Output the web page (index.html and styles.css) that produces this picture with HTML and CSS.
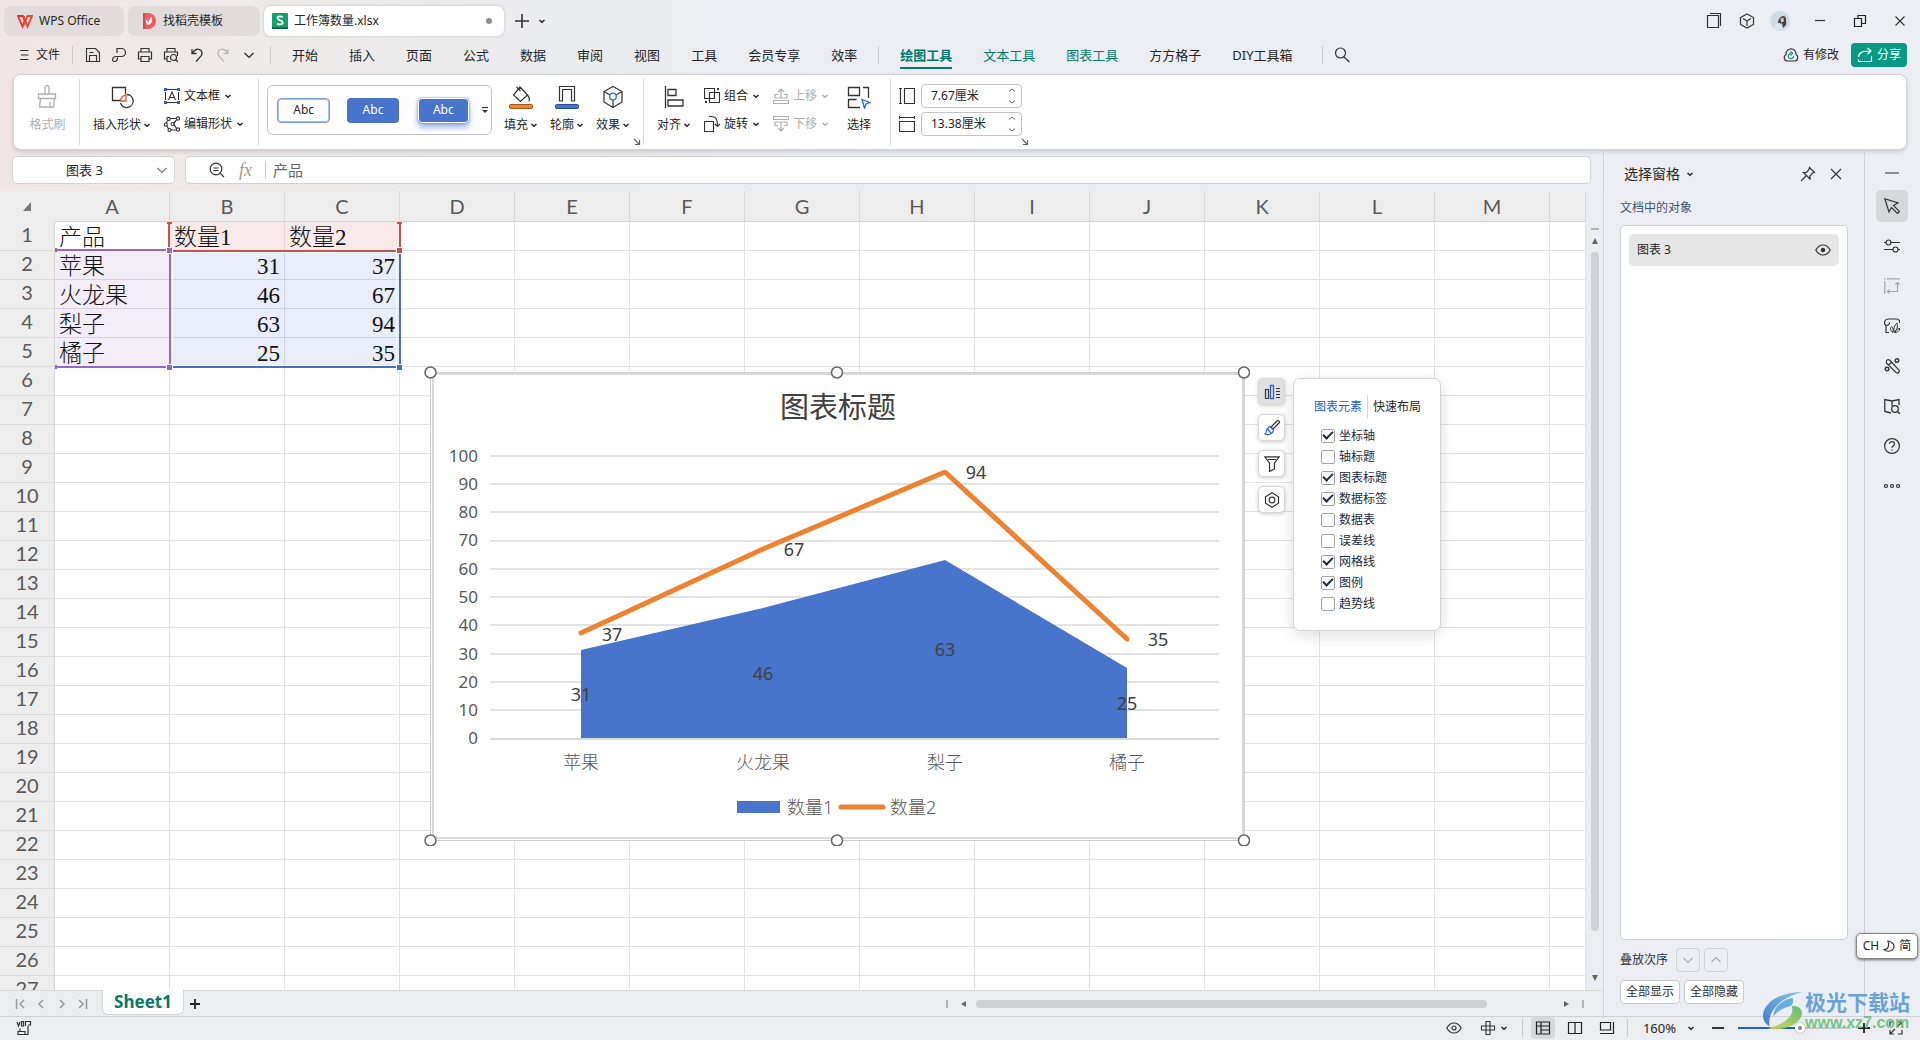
FILE: index.html
```html
<!DOCTYPE html>
<html lang="zh-CN">
<head>
<meta charset="utf-8">
<title>工作簿数量.xlsx - WPS Office</title>
<link rel="stylesheet" href="styles.css">
</head>
<body>
<svg class="sprite" aria-hidden="true">
  <symbol id="chev" viewBox="0 0 8 8"><path d="M1.500 3L4 5.300 6.500 3" fill="none" stroke="currentColor" stroke-width="1.500"/></symbol>
  <symbol id="chev-wide" viewBox="0 0 12 12"><path d="M1.500 4L6 8.500 10.500 4" fill="none" stroke="currentColor" stroke-width="1.200"/></symbol>
  <symbol id="launch" viewBox="0 0 8 8"><path d="M1 1L6.500 6.500M6.500 2V6.500H2" fill="none" stroke="currentColor" stroke-width="1.200"/></symbol>
</svg>

<header class="titlebar">
  <button class="doc-tab home-tab">
    <svg class="i16" viewBox="0 0 16 16"><path d="M1 3h5l1.500 5L5.500 13.500z" fill="none" stroke="#e8302a" stroke-width="1.800"/><path d="M6.500 3L10.500 13.500 15 3H10.500L6 13.500" fill="none" stroke="#f0452c" stroke-width="1.800"/></svg>
    <span>WPS Office</span>
  </button>
  <button class="doc-tab docer-tab">
    <svg class="i16" viewBox="0 0 16 16"><path d="M2 0h4v16H2z" fill="#d94a4d"/><path d="M4 0h3a8 8 0 0 1 0 16H4z" fill="#f25a5c"/><path d="M7 12C4.500 10.500 4.500 8 5 6.500 7 8 7.500 9.500 7 12zM7.500 12C7 8 8.500 5 11 4c.5 4-.5 7-3.500 8z" fill="#fff"/></svg>
    <span>找稻壳模板</span>
  </button>
  <button class="doc-tab file-tab">
    <svg class="i16" viewBox="0 0 16 16"><rect width="16" height="16" rx="1" fill="#13a06c"/><path d="M0 14h16v2H0z" fill="#0a6b49"/><path d="M10.800 4.300C9.500 3 5.500 2.800 5.500 5.200S10.700 7 10.700 9.500 6.500 12 5 10.300" fill="none" stroke="#fff" stroke-width="1.800"/></svg>
    <span>工作簿数量.xlsx</span>
    <i class="unsaved"></i>
  </button>
  <button class="icon-btn new-tab" aria-label="新建"><svg class="i16" viewBox="0 0 16 16"><path d="M8 1v14M1 8h14" stroke="#333" stroke-width="1.600"/></svg></button>
  <button class="icon-btn" aria-label="标签列表"><svg class="i8"><use href="#chev"/></svg></button>
  <div class="window-tools">
    <button class="icon-btn" aria-label="窗口"><svg class="i16" viewBox="0 0 16 16"><path d="M1.500 2.500h11v12h-11zM4 .5h10.500V13" fill="none" stroke="#333" stroke-width="1.200"/></svg></button>
    <button class="icon-btn" aria-label="应用"><svg class="i16" viewBox="0 0 16 16"><path d="M8 1l6.500 3.500v7L8 15l-6.500-3.500v-7zM4 5.500L8 8l4-2.500M8 8v5" fill="none" stroke="#333" stroke-width="1.200"/></svg></button>
    <button class="icon-btn" aria-label="账户"><svg class="i20" viewBox="0 0 20 20"><circle cx="10" cy="10" r="10" fill="#cfdbe2"/><path d="M8 15c0-4 0-7 3-9 2-2 5-1 5 2 0 3 1 5-1 7l-2 2-1-5z" fill="#443f49"/><path d="M10.500 7.500l3-1 .5 4-3 1z" fill="#e8b9a8"/><path d="M4 18c0-4 3-6 6-6l2 5c-3 2-6 2-8 1z" fill="#dde8ed"/></svg></button>
    <button class="icon-btn" aria-label="最小化"><svg class="i16" viewBox="0 0 16 16"><path d="M3 7.500h10" stroke="#333" stroke-width="1.200"/></svg></button>
    <button class="icon-btn" aria-label="还原"><svg class="i16" viewBox="0 0 16 16"><path d="M2.500 5.500h7v8h-7zM6 5V2.500h7.500v8H10" fill="none" stroke="#222" stroke-width="1.200"/></svg></button>
    <button class="icon-btn" aria-label="关闭"><svg class="i16" viewBox="0 0 16 16"><path d="M3.500 3.500l9 9M12.500 3.500l-9 9" stroke="#333" stroke-width="1.200"/></svg></button>
  </div>
</header>

<nav class="menubar">
  <button class="file-menu"><svg class="i12" viewBox="0 0 12 12"><path d="M2 1.500h8.500M3 6h7.500M2 10.500h8.500" stroke="#333" stroke-width="1.200"/></svg><span>文件</span></button>
  <i class="vline"></i>
  <div class="quick">
    <button class="icon-btn" aria-label="保存"><svg class="i16" viewBox="0 0 16 16"><path d="M1.500 1.500h9l4 4v9h-13zM4.500 14.500v-6h7v6M4.500 5.500h4" fill="none" stroke="#333" stroke-width="1.100"/></svg></button>
    <button class="icon-btn" aria-label="输出"><svg class="i16" viewBox="0 0 16 16"><path d="M6 6V1.500h4.500a4 4 0 0 1 0 8H5c-4 0-4.500 5-1.500 5 2 0 3-1 3-4" fill="none" stroke="#333" stroke-width="1.200"/></svg></button>
    <button class="icon-btn" aria-label="打印"><svg class="i16" viewBox="0 0 16 16"><path d="M4 5V1.500h8V5M4 12H1.500V5h13v7H12M4 9.500h8v5H4z" fill="none" stroke="#333" stroke-width="1.200"/></svg></button>
    <button class="icon-btn" aria-label="打印预览"><svg class="i16" viewBox="0 0 16 16"><path d="M4 5V1.500h8V5M4 12H1.500V5h13v4M4 14.500V9.500h2M4 14.500h4" fill="none" stroke="#333" stroke-width="1.200"/><circle cx="10.500" cy="10.500" r="3" fill="none" stroke="#333" stroke-width="1.200"/><path d="M12.700 12.700l2.300 2.300" stroke="#333" stroke-width="1.200"/></svg></button>
    <button class="icon-btn" aria-label="撤销"><svg class="i16" viewBox="0 0 16 16"><path d="M3 2v4.500h4.500M3.500 6C8-1 15 3 12.500 8.500L7 14.500" fill="none" stroke="#333" stroke-width="1.300"/></svg></button>
    <button class="icon-btn" aria-label="恢复" disabled><svg class="i16" viewBox="0 0 16 16"><path d="M13 2v4.500H8.500M12.500 6C8-1 1 3 3.500 8.500L9 14.500" fill="none" stroke="#b5b5b5" stroke-width="1.200"/></svg></button>
    <button class="icon-btn" aria-label="更多"><svg class="i12"><use href="#chev-wide"/></svg></button>
  </div>
  <i class="vline"></i>
  <div class="menus">
    <button>开始</button><button>插入</button><button>页面</button><button>公式</button><button>数据</button><button>审阅</button><button>视图</button><button>工具</button><button>会员专享</button><button>效率</button>
  </div>
  <i class="vline"></i>
  <div class="menus">
    <button class="ctx current">绘图工具</button><button class="ctx">文本工具</button><button class="ctx">图表工具</button><button>方方格子</button><button>DIY工具箱</button>
  </div>
  <i class="vline search-line"></i>
  <button class="icon-btn" aria-label="搜索"><svg class="i16" viewBox="0 0 16 16"><circle cx="6.500" cy="6" r="5" fill="none" stroke="#333" stroke-width="1.200"/><path d="M10 10l5.500 5" stroke="#333" stroke-width="1.300"/></svg></button>
  <div class="share-box">
    <button class="changed"><svg class="i16" viewBox="0 0 16 16"><path d="M4 14a3.500 3.500 0 0 1-1-6.500C3 0 13 0 13 7.500A3.500 3.500 0 0 1 12 14z" fill="none" stroke="#333" stroke-width="1.200"/><path d="M10.500 9A2.600 2.600 0 1 1 8 6.500M7.500 4.500l2 2-2 2" fill="none" stroke="#0b9b7c" stroke-width="1.200"/></svg><span>有修改</span></button>
    <button class="share"><svg class="i16" viewBox="0 0 16 16"><path d="M1.500 10C2 5 6 4 13.500 4M10.500 1l3.500 3-3.500 3M1.500 12v2.500h13V9" fill="none" stroke="#fff" stroke-width="1.200"/></svg><span>分享</span></button>
  </div>
</nav>

<section class="ribbon">
  <div class="group g-brush">
    <button class="big off" disabled><svg class="i24" viewBox="0 0 24 24"><path d="M10 9V2.500a2 2 0 0 1 4 0V9M3.500 9h17v4.500h-17zM5.500 13.500L4.500 22h14l1-8.500M15 22v-5" fill="none" stroke="currentColor" stroke-width="1.300"/></svg><span>格式刷</span></button>
  </div>
  <div class="group g-shape">
    <button class="big"><svg class="i24" viewBox="0 0 24 24"><path d="M11 15.500H2.500v-13h13V9" fill="none" stroke="#333" stroke-width="1.300"/><path d="M17 9.500a6.500 6.500 0 1 1-6.500 8.500" fill="none" stroke="#333" stroke-width="1.300"/><path d="M10.500 16a6 6 0 0 1 5.500-6v6z" fill="none" stroke="#d9622b" stroke-width="1.400"/></svg><span>插入形状<svg class="i8"><use href="#chev"/></svg></span></button>
    <div class="stack">
      <button class="line"><svg class="i16" viewBox="0 0 16 16"><path d="M3 1.500h10M3 14.500h10M1.500 4v8M14.500 4v8" stroke="#333"/><path d="M4.500 12L8 4l3.500 8M5.500 9.500h5" fill="none" stroke="#333" stroke-width="1.100"/><path d="M0 0h3v3H0zM13 0h3v3h-3zM0 13h3v3H0zM13 13h3v3h-3z" fill="#2f5bea"/></svg><span>文本框</span><svg class="i8"><use href="#chev"/></svg></button>
      <button class="line"><svg class="i16" viewBox="0 0 16 16"><path d="M6 2.500h6M3.500 5L2 7.500M2.500 9.500L5 13.500M7 14h5M12.500 4L9.500 7.500l3 5" fill="none" stroke="#333" stroke-width="1.200"/><g fill="#fff" stroke="#333" stroke-width="1.100"><circle cx="4.500" cy="3" r="1.600"/><circle cx="14" cy="2.500" r="1.600"/><circle cx="1.800" cy="8.500" r="1.500"/><circle cx="8.500" cy="8" r="1.500"/><circle cx="5.500" cy="14" r="1.500"/><circle cx="14" cy="13.500" r="1.600"/></g></svg><span>编辑形状</span><svg class="i8"><use href="#chev"/></svg></button>
    </div>
  </div>
  <div class="group g-style">
    <div class="gallery">
      <button class="swatch outline">Abc</button>
      <button class="swatch fill">Abc</button>
      <button class="swatch fill glow">Abc</button>
      <button class="icon-btn" aria-label="更多样式"><svg class="i8" viewBox="0 0 8 8"><path d="M1 1.500h6" stroke="#333" stroke-width="1.200"/><path d="M1 4h6L4 7z" fill="#333"/></svg></button>
    </div>
    <button class="big"><svg class="i24" viewBox="0 0 24 24"><path d="M11 2l7.500 8-7 6.500L4.500 10zM7.500 2l4 4M18.500 10c2.500 3 2 6 1 6" fill="none" stroke="#333" stroke-width="1.200"/><rect x=".5" y="19.500" width="23" height="4" rx="1" fill="#f0832e" stroke="#a85a1c"/></svg><span>填充<svg class="i8"><use href="#chev"/></svg></span></button>
    <button class="big"><svg class="i24" viewBox="0 0 24 24"><path d="M4.500 16V1.500h15V16h-3V4.500h-9V16z" fill="none" stroke="#333" stroke-width="1.200"/><rect x=".5" y="19.500" width="23" height="4" rx="1" fill="#4874cb" stroke="#2b4f96"/></svg><span>轮廓<svg class="i8"><use href="#chev"/></svg></span></button>
    <button class="big"><svg class="i24" viewBox="0 0 24 24"><path d="M12 1.500l9 5v10.500l-9 5.500-9-5.500V6.500zM3 6.500l6 3.500M21 6.500L15 10M12 15v7" fill="none" stroke="#333" stroke-width="1.200"/><circle cx="12" cy="11.500" r="3.300" fill="none" stroke="#2f6be0" stroke-width="1.300"/></svg><span>效果<svg class="i8"><use href="#chev"/></svg></span></button>
    <svg class="i8 launcher"><use href="#launch"/></svg>
  </div>
  <div class="group g-arrange">
    <button class="big"><svg class="i24" viewBox="0 0 24 24"><path d="M3.500 1v22M6 4.500h8v6H6zM6 15h15v6H6z" fill="none" stroke="#333" stroke-width="1.300"/></svg><span>对齐<svg class="i8"><use href="#chev"/></svg></span></button>
    <div class="stack">
      <button class="line"><svg class="i16" viewBox="0 0 16 16"><path d="M.5.500h10v10H.5zM5.500 4.500h10v10h-10z" fill="none" stroke="#333" stroke-width="1.200"/><path d="M13 0h2v2h-2zM1 13h2v2H1z" fill="#333"/></svg><span>组合</span><svg class="i8"><use href="#chev"/></svg></button>
      <button class="line"><svg class="i16" viewBox="0 0 16 16"><path d="M.5 5.500h9v10h-9zM5 .5c6 0 8.500 1 8.500 9.500M11 8l2.500 2.500L16 8" fill="none" stroke="#333" stroke-width="1.200"/></svg><span>旋转</span><svg class="i8"><use href="#chev"/></svg></button>
    </div>
    <div class="stack">
      <button class="line off" disabled><svg class="i16" viewBox="0 0 16 16"><path d="M8 1v9M5 4l3-3 3 3M5 6.500H2v3.500h12V6.500h-3M.5 12.500h15v3H.5z" fill="none" stroke="currentColor" stroke-width="1.200"/></svg><span>上移</span><svg class="i8"><use href="#chev"/></svg></button>
      <button class="line off" disabled><svg class="i16" viewBox="0 0 16 16"><path d="M8 6v9M5 12l3 3 3-3M5 9.500H2V6h12v3.500h-3M.5.500h15v3H.5z" fill="none" stroke="currentColor" stroke-width="1.200"/></svg><span>下移</span><svg class="i8"><use href="#chev"/></svg></button>
    </div>
    <button class="big pick"><svg class="i24" viewBox="0 0 24 24"><path d="M1.500 2.500h11v8h-11zM16 2.500h5.500V13M1.500 14v8.500H13M1.500 14.500h8" fill="none" stroke="#333" stroke-width="1.300"/><path d="M15 14.500l8 3-4 1.500-1.500 4z" fill="#fff" stroke="#2f5bea" stroke-width="1.300"/></svg><span>选择</span></button>
  </div>
  <div class="group g-size">
    <div class="sizes">
      <label class="size"><svg class="i16" viewBox="0 0 16 16"><path d="M1.500 0v16M0 .5h3M0 15.500h3M5.500.500h10v15h-10z" fill="none" stroke="#333" stroke-width="1.200"/></svg>
        <span class="spin"><input type="text" value="7.67厘米" aria-label="高度"><svg class="arrows" viewBox="0 0 8 18"><path d="M1 4.500L4 2l3 2.500M1 13.500L4 16l3-2.500" fill="none" stroke="#666"/></svg></span></label>
      <label class="size"><svg class="i16" viewBox="0 0 16 16"><path d="M0 1.500h16M.5 0v3M15.500 0v3M.5 5.500h15v10H.5z" fill="none" stroke="#333" stroke-width="1.200"/></svg>
        <span class="spin"><input type="text" value="13.38厘米" aria-label="宽度"><svg class="arrows" viewBox="0 0 8 18"><path d="M1 4.500L4 2l3 2.500M1 13.500L4 16l3-2.500" fill="none" stroke="#666"/></svg></span></label>
    </div>
    <svg class="i8 launcher"><use href="#launch"/></svg>
  </div>
</section>

<main class="workspace">
  <section class="book">
    <div class="formula-row">
      <div class="name-box"><input type="text" value="图表 3" aria-label="名称框"><svg class="i12"><use href="#chev-wide"/></svg></div>
      <div class="formula-box">
        <svg class="i16" viewBox="0 0 16 16"><circle cx="7" cy="7" r="5.800" fill="none" stroke="#333" stroke-width="1.200"/><path d="M11.300 11.300L15 15M4.500 6h5M4.500 8.500h5" stroke="#333" stroke-width="1.200"/></svg>
        <em>fx</em>
        <input type="text" value="产品" aria-label="编辑栏">
      </div>
    </div>
    <div class="sheet-row">
      <div class="sheet">
        <table class="cells">
          <colgroup><col class="c-head"><col class="c"><col class="c"><col class="c"><col class="c"><col class="c"><col class="c"><col class="c"><col class="c"><col class="c"><col class="c"><col class="c"><col class="c"><col class="c"><col></colgroup>
          <thead><tr><th class="corner"><svg class="i12" viewBox="0 0 12 12"><path d="M10 2v9H2z" fill="#777"/></svg></th><th>A</th><th>B</th><th>C</th><th>D</th><th>E</th><th>F</th><th>G</th><th>H</th><th>I</th><th>J</th><th>K</th><th>L</th><th>M</th><th></th></tr></thead>
          <tbody>
          <tr><th>1</th><td>产品</td><td class="red">数量1</td><td class="red">数量2</td><td><td><td><td><td><td><td><td><td><td><td></tr>
          <tr><th>2</th><td class="violet">苹果</td><td class="blue">31</td><td class="blue">37</td><td><td><td><td><td><td><td><td><td><td><td></tr>
          <tr><th>3</th><td class="violet">火龙果</td><td class="blue">46</td><td class="blue">67</td><td><td><td><td><td><td><td><td><td><td><td></tr>
          <tr><th>4</th><td class="violet">梨子</td><td class="blue">63</td><td class="blue">94</td><td><td><td><td><td><td><td><td><td><td><td></tr>
          <tr><th>5</th><td class="violet">橘子</td><td class="blue">25</td><td class="blue">35</td><td><td><td><td><td><td><td><td><td><td><td></tr>
          <tr><th>6</th><td><td><td><td><td><td><td><td><td><td><td><td><td><td></tr>
          <tr><th>7</th><td><td><td><td><td><td><td><td><td><td><td><td><td><td></tr>
          <tr><th>8</th><td><td><td><td><td><td><td><td><td><td><td><td><td><td></tr>
          <tr><th>9</th><td><td><td><td><td><td><td><td><td><td><td><td><td><td></tr>
          <tr><th>10</th><td><td><td><td><td><td><td><td><td><td><td><td><td><td></tr>
          <tr><th>11</th><td><td><td><td><td><td><td><td><td><td><td><td><td><td></tr>
          <tr><th>12</th><td><td><td><td><td><td><td><td><td><td><td><td><td><td></tr>
          <tr><th>13</th><td><td><td><td><td><td><td><td><td><td><td><td><td><td></tr>
          <tr><th>14</th><td><td><td><td><td><td><td><td><td><td><td><td><td><td></tr>
          <tr><th>15</th><td><td><td><td><td><td><td><td><td><td><td><td><td><td></tr>
          <tr><th>16</th><td><td><td><td><td><td><td><td><td><td><td><td><td><td></tr>
          <tr><th>17</th><td><td><td><td><td><td><td><td><td><td><td><td><td><td></tr>
          <tr><th>18</th><td><td><td><td><td><td><td><td><td><td><td><td><td><td></tr>
          <tr><th>19</th><td><td><td><td><td><td><td><td><td><td><td><td><td><td></tr>
          <tr><th>20</th><td><td><td><td><td><td><td><td><td><td><td><td><td><td></tr>
          <tr><th>21</th><td><td><td><td><td><td><td><td><td><td><td><td><td><td></tr>
          <tr><th>22</th><td><td><td><td><td><td><td><td><td><td><td><td><td><td></tr>
          <tr><th>23</th><td><td><td><td><td><td><td><td><td><td><td><td><td><td></tr>
          <tr><th>24</th><td><td><td><td><td><td><td><td><td><td><td><td><td><td></tr>
          <tr><th>25</th><td><td><td><td><td><td><td><td><td><td><td><td><td><td></tr>
          <tr><th>26</th><td><td><td><td><td><td><td><td><td><td><td><td><td><td></tr>
          <tr><th>27</th><td><td><td><td><td><td><td><td><td><td><td><td><td><td></tr>
          </tbody>
        </table>

        <svg class="ranges" viewBox="54 30 350 150" aria-hidden="true">
          <path d="M172 61.500H396M58 57.500H166M172 174.500H396M396.500 62V172M172.500 62V172" stroke="#fff"/>
          <path d="M169 31V60M400 31V60M167 32h5M397 32h5M170 60H400" stroke="#c8504f" stroke-width="2" fill="none"/>
          <path d="M56 59H170M56 176H170M170 59V176M56 57v4M56 174v4" stroke="#9568c3" stroke-width="2" fill="none"/>
          <path d="M172 176H400V62" stroke="#4470cc" stroke-width="2" fill="none"/>
          <g stroke="#fff"><path d="M166.500 56.500h6v6h-6zM166.500 173.500h6v6h-6z" fill="#9568c3"/><path d="M396.500 56.500h6v6h-6z" fill="#c8504f"/><path d="M396.500 173.500h6v6h-6z" fill="#4470cc"/></g>
        </svg>

        <svg class="chart" viewBox="424 367 826 480" role="img" aria-label="图表标题">
          <rect x="430.500" y="373.500" width="814" height="468" fill="#fff" stroke="#d0d0d0"/>
          <rect x="433" y="375" width="810" height="464" fill="#fff" stroke="#d9d9d9" stroke-width="2"/>
          <text class="chart-title" x="838" y="419">图表标题</text>
          <path d="M490 457H1219M490 485H1219M490 513H1219M490 542H1219M490 570H1219M490 598H1219M490 626H1219M490 655H1219M490 683H1219M490 711H1219" stroke="#e3e3e3" stroke-width="2"/>
          <path d="M490 740H1219" stroke="#d9d9d9" stroke-width="2"/>
          <path d="M581 651L763 609 945 561 1127 669V739H581z" fill="#4874cb"/>
          <path d="M581 634L763 550 945 473 1127 640" fill="none" stroke="#ee822f" stroke-width="5" stroke-linecap="round" stroke-linejoin="bevel"/>
          <g class="axis-y"><text x="478" y="463">100</text><text x="478" y="491">90</text><text x="478" y="519">80</text><text x="478" y="547">70</text><text x="478" y="576">60</text><text x="478" y="604">50</text><text x="478" y="632">40</text><text x="478" y="661">30</text><text x="478" y="689">20</text><text x="478" y="717">10</text><text x="478" y="745">0</text></g>
          <g class="axis-x"><text x="581" y="770">苹果</text><text x="763" y="770">火龙果</text><text x="945" y="770">梨子</text><text x="1127" y="770">橘子</text></g>
          <g class="values"><text x="581" y="702">31</text><text x="763" y="681">46</text><text x="945" y="657">63</text><text x="1127" y="711">25</text><text x="612" y="642">37</text><text x="794" y="557">67</text><text x="976" y="480">94</text><text x="1158" y="647">35</text></g>
          <rect x="737" y="802" width="43" height="12" fill="#4874cb"/>
          <path d="M841 808H883" stroke="#ee822f" stroke-width="5" stroke-linecap="round"/>
          <g class="legend"><text x="787" y="815">数量1</text><text x="890" y="815">数量2</text></g>
          <g fill="#fff" stroke="#666" stroke-width="1.500"><circle cx="430.500" cy="373.500" r="5.500"/><circle cx="837" cy="373.500" r="5.500"/><circle cx="1244" cy="373.500" r="5.500"/><circle cx="430.500" cy="841.500" r="5.500"/><circle cx="837" cy="841.500" r="5.500"/><circle cx="1244" cy="841.500" r="5.500"/></g>
        </svg>

        <div class="chart-tools">
          <button class="active" aria-label="图表元素"><svg class="i16" viewBox="0 0 16 16"><path d="M1.500 5.500h3v9h-3z" fill="none" stroke="#333" stroke-width="1.200"/><path d="M6.500 1.500h3v13h-3z" fill="none" stroke="#2f5bea" stroke-width="1.300"/><path d="M12 4.500h4M12 7.500h4M12 10.500h4M12 13.500h4" stroke="#333" stroke-width="1.200"/></svg></button>
          <button aria-label="图表样式"><svg class="i16" viewBox="0 0 16 16"><path d="M7 7l6-6c2-1 3 1 2 2L9 9z" fill="none" stroke="#333" stroke-width="1.200"/><path d="M6 6.500L9.500 10c-1 5-6 5-8.500 4 2-1 1-3 2-5 1-1 2-1.500 3-2.500zM3.500 9L7 13" fill="none" stroke="#2f5bea" stroke-width="1.200"/></svg></button>
          <button aria-label="图表筛选"><svg class="i16" viewBox="0 0 16 16"><path d="M.8.800h14.400L10.500 7v6l-5 2.500V7zM4 3.500h8" fill="none" stroke="#333" stroke-width="1.200"/></svg></button>
          <button aria-label="图表设置"><svg class="i16" viewBox="0 0 16 16"><path d="M8 .8l6.500 4v6.400L8 15.200l-6.500-4V4.800z" fill="none" stroke="#333" stroke-width="1.200"/><circle cx="8" cy="8" r="2.800" fill="none" stroke="#333" stroke-width="1.200"/></svg></button>
        </div>
        <div class="elements">
          <div class="el-tabs"><button class="on">图表元素</button><i></i><button>快速布局</button></div>
          <label><input type="checkbox" checked>坐标轴</label>
          <label><input type="checkbox">轴标题</label>
          <label><input type="checkbox" checked>图表标题</label>
          <label><input type="checkbox" checked>数据标签</label>
          <label><input type="checkbox">数据表</label>
          <label><input type="checkbox">误差线</label>
          <label><input type="checkbox" checked>网格线</label>
          <label><input type="checkbox" checked>图例</label>
          <label><input type="checkbox">趋势线</label>
        </div>
      </div>
      <div class="vscroll"><i class="dash"></i><svg class="i8" viewBox="0 0 8 8"><path d="M4 1l3 6H1z" fill="#666"/></svg><div class="vtrack"><i class="vthumb"></i></div><svg class="i8" viewBox="0 0 8 8"><path d="M4 7l3-6H1z" fill="#666"/></svg></div>
    </div>
    <footer class="sheet-tabs">
      <div class="sheet-nav">
        <button class="icon-btn" aria-label="第一张"><svg class="i12" viewBox="0 0 12 12"><path d="M2.500 1v10M10 2L6 6l4 4" fill="none" stroke="currentColor" stroke-width="1.500"/></svg></button>
        <button class="icon-btn" aria-label="上一张"><svg class="i12" viewBox="0 0 12 12"><path d="M8 2L4 6l4 4" fill="none" stroke="currentColor" stroke-width="1.500"/></svg></button>
        <button class="icon-btn" aria-label="下一张"><svg class="i12" viewBox="0 0 12 12"><path d="M4 2l4 4-4 4" fill="none" stroke="currentColor" stroke-width="1.500"/></svg></button>
        <button class="icon-btn" aria-label="最后一张"><svg class="i12" viewBox="0 0 12 12"><path d="M9.500 1v10M2 2l4 4-4 4" fill="none" stroke="currentColor" stroke-width="1.500"/></svg></button>
      </div>
      <button class="sheet-tab">Sheet1</button>
      <button class="icon-btn add-sheet" aria-label="新建工作表"><svg class="i12" viewBox="0 0 12 12"><path d="M6 1v10M1 6h10" stroke="#222" stroke-width="1.800"/></svg></button>
      <div class="hscroll"><i class="bar"></i><svg class="i8" viewBox="0 0 8 8"><path d="M1 4l5-3v6z" fill="#666"/></svg><div class="htrack"><i class="hthumb"></i></div><svg class="i8" viewBox="0 0 8 8"><path d="M7 4L2 1v6z" fill="#666"/></svg><i class="bar"></i></div>
    </footer>
  </section>

  <aside class="pane">
    <div class="pane-head"><h2>选择窗格</h2><svg class="i8"><use href="#chev"/></svg>
      <div class="pane-actions">
        <button class="icon-btn" aria-label="固定"><svg class="i16" viewBox="0 0 16 16"><path d="M9.500 1.500l5 5-2 .5-2.500 3v3L3.500 6.500h3l2.500-3zM6 10l-5 5" fill="none" stroke="#333" stroke-width="1.200"/></svg></button>
        <button class="icon-btn" aria-label="关闭窗格"><svg class="i12" viewBox="0 0 12 12"><path d="M1 1l10 10M11 1L1 11" stroke="#333" stroke-width="1.200"/></svg></button>
      </div>
    </div>
    <p class="pane-sub">文档中的对象</p>
    <ul class="objects"><li><span>图表 3</span><svg class="i16" viewBox="0 0 16 16"><path d="M.8 8C3 4 5.500 3 8 3s5 1 7.200 5C13 12 10.500 13 8 13S3 12 .8 8z" fill="none" stroke="#333" stroke-width="1.200"/><circle cx="8" cy="8" r="2.200" fill="#333"/></svg></li></ul>
    <div class="order"><span>叠放次序</span><button disabled aria-label="下移一层"><svg class="i12"><use href="#chev-wide"/></svg></button><button disabled aria-label="上移一层"><svg class="i12 flip"><use href="#chev-wide"/></svg></button></div>
    <div class="show-all"><button>全部显示</button><button>全部隐藏</button></div>
  </aside>

  <aside class="rail">
    <button class="mini" aria-label="收起"><svg class="i16" viewBox="0 0 16 16"><path d="M1 8h14" stroke="#8c8c8c" stroke-width="2"/></svg></button>
    <button class="on" aria-label="选择"><svg class="i16" viewBox="0 0 16 16"><path d="M.8.800L14 5 9.500 7.500 15.500 13.500 13.500 15.500 7.500 9.500 5 14z" fill="none" stroke="#333" stroke-width="1.200"/></svg></button>
    <button aria-label="属性"><svg class="i16" viewBox="0 0 16 16"><path d="M0 4.500h2M7 4.500h9M0 11.500h9M14 11.500h2" stroke="#333" stroke-width="1.200"/><circle cx="4.500" cy="4.500" r="2.500" fill="none" stroke="#333" stroke-width="1.200"/><circle cx="11.500" cy="11.500" r="2.500" fill="none" stroke="#333" stroke-width="1.200"/></svg></button>
    <button aria-label="分析" disabled><svg class="i16" viewBox="0 0 16 16"><path d="M3 .8h13M.8 3v13M0 .8h1.600M13.500 4.500v9h-10M11.500 6.500l2-2 2 2M5.500 11.500l-2 2 2 2" fill="none" stroke="#a5a5a5" stroke-width="1.200"/></svg></button>
    <button aria-label="图库"><svg class="i16" viewBox="0 0 16 16"><path d="M5 14.500H2V7.500C-1 5 1 1 4 1h9c2 0 3 2 2.500 4M5.500 4.500c0 2-2 3-3.500 3" fill="none" stroke="#333" stroke-width="1.200"/><path d="M8.500 14.500C6 12 6 10 7.500 8.500 9.500 10 9.500 12 8.500 14.500zM10 14.500C9.500 10 10.500 7 13 5c1 4 0 7-3 9.500zM11 14.500c1-3 3-4 5-4-1 3-3 4-5 4z" fill="none" stroke="#333"/></svg></button>
    <button aria-label="工具"><svg class="i16" viewBox="0 0 16 16"><path d="M5.500 2L15 12c1 2-1 4-3 2.500L2.500 5C2 2.500 3.500 1 5.500 2zM4.500 7L7.500 4.500" fill="none" stroke="#333" stroke-width="1.200"/><circle cx="13" cy="2.500" r="1.800" fill="none" stroke="#333" stroke-width="1.400"/><circle cx="3" cy="11" r="1.800" fill="none" stroke="#333" stroke-width="1.400"/></svg></button>
    <button aria-label="查找"><svg class="i16" viewBox="0 0 16 16"><path d="M7 15L.8 13.500V1.500L8 3l7-1.500V7M8 3v5" fill="none" stroke="#333" stroke-width="1.300"/><circle cx="11" cy="11" r="3.300" fill="none" stroke="#333" stroke-width="1.300"/><path d="M13.500 13.500L16 16" stroke="#333" stroke-width="1.300"/></svg></button>
    <button aria-label="帮助"><svg class="i16" viewBox="0 0 16 16"><circle cx="8" cy="8" r="7.400" fill="none" stroke="#333" stroke-width="1.200"/><path d="M5.500 6C5.500 2.500 10.500 3 10.500 6 10.500 7.500 8 7.500 8 10M8 11.500v1.200" fill="none" stroke="#333" stroke-width="1.200"/></svg></button>
    <button aria-label="更多"><svg class="i16" viewBox="0 0 16 16"><g fill="none" stroke="#333" stroke-width="1.200"><circle cx="2" cy="8" r="1.500"/><circle cx="8" cy="8" r="1.500"/><circle cx="14" cy="8" r="1.500"/></g></svg></button>
  </aside>
</main>

<footer class="status">
  <svg class="i16" viewBox="0 0 16 16"><path d="M1 2l1.500 4L4 2M5.500 1.500V6h2V1.500zM9.500 6V1.500h5V5H12M2 14.500v-3h7v3zM4 11.500v-3M9 14.500h3V6" fill="none" stroke="#333" stroke-width="1.200"/></svg>
  <div class="status-tools">
    <svg class="i16 eye" viewBox="0 0 16 16"><path d="M.8 8C3 4 5.500 3 8 3s5 1 7.200 5C13 12 10.500 13 8 13S3 12 .8 8z" fill="none" stroke="#333" stroke-width="1.200"/><circle cx="8" cy="8" r="2" fill="none" stroke="#333" stroke-width="1.200"/></svg>
    <button class="icon-btn move" aria-label="阅读布局"><svg class="i16" viewBox="0 0 16 16"><path d="M6 5.500V1.500h4v4M6 10.500v4h4v-4M5.500 6H1.500v4h4M10.500 6h4v4h-4M6 6h4v4H6z" fill="none" stroke="#333" stroke-width="1.100"/></svg><svg class="i8"><use href="#chev"/></svg></button>
    <i class="vline"></i>
    <button class="icon-btn view on" aria-label="普通视图"><svg class="i16" viewBox="0 0 16 16"><path d="M1.500 2h13v12h-13zM1.500 6h13M6 2v12M6 10h8.500" fill="none" stroke="#222" stroke-width="1.200"/></svg></button>
    <button class="icon-btn view" aria-label="分页预览"><svg class="i16" viewBox="0 0 16 16"><path d="M1.500 2.500h13v11h-13zM8 2.500v11" fill="none" stroke="#222" stroke-width="1.200"/></svg></button>
    <button class="icon-btn view" aria-label="页面布局"><svg class="i16" viewBox="0 0 16 16"><path d="M1.500 2.500h10v7.500h-10zM14.500 2v11.500H1" fill="none" stroke="#222" stroke-width="1.200"/></svg></button>
    <i class="vline"></i>
    <button class="icon-btn zoom-level"><span>160%</span><svg class="i8"><use href="#chev"/></svg></button>
    <button class="icon-btn" aria-label="缩小"><svg class="i12" viewBox="0 0 12 12"><path d="M0 6h12" stroke="#222" stroke-width="1.800"/></svg></button>
    <input class="zoom" type="range" min="0" max="100" value="55" aria-label="缩放">
    <button class="icon-btn" aria-label="放大"><svg class="i12" viewBox="0 0 12 12"><path d="M0 6h12M6 1v10" stroke="#222" stroke-width="1.800"/></svg></button>
    <button class="icon-btn full" aria-label="全屏"><svg class="i16" viewBox="0 0 16 16"><path d="M2 6V2h4M10 2h4v4M14 10v4h-4M6 14H2v-4M9 7l5-5M7 9l-5 5" fill="none" stroke="#333" stroke-width="1.200"/></svg></button>
  </div>
</footer>

<div class="ime"><span>CH</span><svg class="i12" viewBox="0 0 12 12"><path d="M5 1c5 1 7 4 5.500 7.500C8.500 12 3 12 1 9.500 5 9.500 6.500 6 5 1z" fill="none" stroke="#333" stroke-width="1.200"/></svg><span>简</span></div>
<div class="watermark">
  <svg class="wm-logo" viewBox="0 0 44 40"><defs><linearGradient id="wmb" x1="0" y1="1" x2="1" y2="0"><stop offset="0" stop-color="#2f6fc4"/><stop offset="1" stop-color="#7cc4ee"/></linearGradient><linearGradient id="wmg" x1="0" y1="1" x2="1" y2="0"><stop offset="0" stop-color="#d8d84a"/><stop offset="1" stop-color="#4dbb6e"/></linearGradient></defs><path d="M43 0C20 0 2 10 1 25c0 5 3 9 7 11C5 24 16 6 43 0z" fill="url(#wmb)"/><path d="M32 6C20 9 12 16 12 26c4-6 10-9 17-11 4-1 4-5 3-9z" fill="#5aa9e0"/><path d="M6 38c16 4 34-4 36-15 0-6-5-9-11-8 4 8-6 19-25 23z" fill="url(#wmg)"/></svg>
  <div><strong>极光下载站</strong><span>www.xz7.com</span></div>
</div>
</body>
</html>
```
FILE: styles.css
```css
* { box-sizing: border-box; }
html, body { height: 100%; margin: 0; }
body {
  display: flex;
  flex-direction: column;
  overflow: hidden;
  font: 12px/20px "Noto Sans", "Noto Sans CJK SC", sans-serif;
  color: #262626;
  background: linear-gradient(90deg, #efe5e4 0, #eeeae9 240px, #ebecee 560px, #ebedf3 800px, #ebeef2 100%);
}
button, input { font: inherit; color: inherit; }
button { padding: 0; border: 0; background: none; white-space: nowrap; }
input { min-width: 0; border: 0; padding: 0; background: none; outline: 0; }
svg { display: block; flex: none; }
.sprite { position: absolute; width: 0; height: 0; }
.i8 { width: 8px; height: 8px; }
.i12 { width: 12px; height: 12px; }
.i16 { width: 16px; height: 16px; }
.i20 { width: 20px; height: 20px; }
.i24 { width: 24px; height: 24px; }
.icon-btn { display: flex; align-items: center; justify-content: center; }
.vline { flex: none; width: 1px; height: 18px; background: #c9c9cb; }

/* title bar */
.titlebar { display: flex; align-items: center; height: 42px; padding: 0 10px 0 4px; flex: none; }
.doc-tab { display: flex; align-items: center; gap: 6px; height: 30px; margin-right: 4px; padding: 0 13px; border-radius: 7px; background: #e1dcdb; }
.home-tab { width: 120px; }
.docer-tab { width: 132px; }
.file-tab { width: 240px; padding: 0 12px 0 8px; background: #fff; box-shadow: 0 0 3px #0003; }
.unsaved { width: 6px; height: 6px; margin-left: auto; border-radius: 50%; background: #8c8c8c; }
.new-tab { margin: 0 8px 0 6px; }
.window-tools { display: flex; align-items: center; gap: 13px; margin-left: auto; }
.window-tools .icon-btn { width: 20px; }
.window-tools .icon-btn:nth-child(n+4) { margin-left: 7px; }

/* menu bar */
.menubar { display: flex; align-items: center; height: 32px; padding: 0 13px 6px 18px; flex: none; }
.file-menu { display: flex; align-items: center; gap: 6px; margin-right: 12px; }
.quick { display: flex; gap: 10px; margin: 0 13px 0 12px; }
.quick .icon-btn { width: 16px; }
.menus { display: flex; gap: 31px; margin: 0 21px; font-size: 13px; }
.menus button { height: 27px; border-bottom: 2px solid transparent; border-top: 2px solid transparent; }
.menus .ctx { color: #057a68; }
.menus .current { font-weight: 700; border-bottom-color: #057a68; }
.search-line { margin: 0 11px 0 8px; }
.share-box { display: flex; align-items: center; gap: 12px; margin-left: auto; }
.changed, .share { display: flex; align-items: center; gap: 4px; }
.share { height: 24px; padding: 0 6px; border-radius: 4px; background: #079a82; color: #fff; }

/* ribbon */
.ribbon { display: flex; flex: none; height: 76px; margin: 0 13px; border: 1px solid #d4d4d8; border-radius: 8px; background: #fff; box-shadow: 0 2px 4px #0002; }
.group { position: relative; display: flex; align-items: center; margin: 4px 0; padding-bottom: 4px; border-right: 1px solid #d9d9d9; }
.g-size { border-right: 0; }
.big { display: flex; flex-direction: column; align-items: center; gap: 6px; }
.big > span { display: flex; align-items: center; gap: 2px; }
.off { color: #b0b0b0; }
.stack { display: flex; flex-direction: column; gap: 8px; }
.line { display: flex; align-items: center; gap: 4px; }
.g-brush { width: 66px; padding-left: 2px; justify-content: center; }
.g-shape { width: 179px; padding-left: 13px; gap: 13px; }
.g-style { width: 385px; padding-left: 8px; gap: 12px; }
.gallery { display: flex; align-items: center; width: 225px; height: 50px; padding: 0 2px 0 9px; border: 1px solid #c4c4c4; border-radius: 6px; }
.swatch { width: 52px; height: 25px; margin-right: 19px; border-radius: 4px; }
.outline { width: 54px; margin-right: 17px; border: 1px solid #7e9bdb; box-shadow: inset 0 0 0 1px #a9bdea; }
.fill { background: #4874cb; color: #fff; }
.glow { margin-right: 12px; border: 1px solid #fff; box-shadow: 0 4px 6px #4874cb99, 0 0 2px #4874cb; }
.launcher { position: absolute; right: 2px; bottom: -1px; color: #666; }
.g-arrange { width: 247px; padding-left: 13px; gap: 13px; }
.pick { margin-left: 5px; }
.g-size { width: 140px; padding-left: 8px; }
.sizes { display: flex; flex-direction: column; gap: 4px; }
.size { display: flex; align-items: center; gap: 6px; }
.spin { display: flex; align-items: center; width: 101px; height: 24px; padding: 0 5px 0 9px; border: 1px solid #c4c4c4; border-radius: 4px; }
.spin input { flex: 1; }
.arrows { width: 8px; height: 18px; }

/* workbook */
.workspace { display: flex; flex: 1; min-height: 0; }
.book { display: flex; flex-direction: column; flex: 1; min-width: 0; }
.formula-row { display: flex; gap: 10px; padding: 6px 12px 7px; }
.name-box, .formula-box { display: flex; align-items: center; height: 28px; border: 1px solid #d3d3d6; border-radius: 5px; background: #fff; }
.name-box { width: 163px; padding-right: 6px; font-size: 13px; }
.name-box input { flex: 1; text-align: center; }
.name-box svg { color: #777; }
.formula-box { flex: 1; padding-left: 23px; gap: 14px; }
.formula-box em { padding-right: 13px; border-right: 1px solid #ccc; font: italic 18px/18px "Liberation Serif", serif; color: #999; }
.formula-box input { flex: 1; height: 24px; margin: 0 0 2px -7px; font-size: 15px; color: #666; }
.sheet-row { display: flex; flex: 1; min-height: 0; }
.sheet { position: relative; flex: 1; min-width: 0; overflow: hidden; background: #fff; }
.cells { width: 100%; table-layout: fixed; border-collapse: separate; border-spacing: 0; }
.c-head { width: 55px; }
.c { width: 115px; }
.cells th { height: 29px; padding: 0 0 4px; border-right: 1px solid #d4d4d4; border-bottom: 1px solid #dadada; background: #ededed; font: 20px/24px Lato, sans-serif; color: #595959; }
.cells thead th { height: 31px; padding: 0; line-height: 30px; border-right-color: #d9d9d9; border-bottom-color: #d4d4d4; }
.cells thead .corner { border-color: #ededed; }
.corner svg { margin: 0 auto; }
.cells td { height: 29px; padding: 4px 4px 0; border-right: 1px solid #e3e3e3; border-bottom: 1px solid #e3e3e3; font: 300 23px/24px "Liberation Serif", "Noto Sans CJK SC", serif; color: #111; }
.cells .red { background: #f8eaea; border-color: #e5d3d3; }
.cells .violet { background: #f3edf8; border-color: #d8cfe0; }
.cells .blue { background: #e8edf9; border-color: #cdd2e0; text-align: right; }
.ranges { position: absolute; left: 54px; top: 30px; width: 350px; height: 150px; }
.chart { position: absolute; left: 424px; top: 175px; width: 826px; height: 480px; }
.chart text { font-family: "Noto Sans", "Noto Sans CJK SC", sans-serif; font-size: 18px; fill: #404040; }
.chart .chart-title { font-size: 29px; text-anchor: middle; }
.chart .axis-y text { font-size: 17px; text-anchor: end; fill: #595959; }
.chart .axis-x text { text-anchor: middle; fill: #595959; font-weight: 300; }
.chart .values text { text-anchor: middle; }
.chart .legend text { fill: #595959; font-weight: 300; }
.chart-tools { position: absolute; left: 1258px; top: 187px; display: flex; flex-direction: column; gap: 9px; }
.chart-tools button { display: flex; align-items: center; justify-content: center; width: 27px; height: 27px; border: 1px solid #d9d9d9; border-radius: 5px; background: #fff; box-shadow: 0 1px 4px #0003; }
.chart-tools .active { background: #e0e0e0; }
.elements { position: absolute; left: 1293px; top: 187px; width: 148px; padding: 16px 19px 16px 20px; border: 1px solid #d4d4d4; border-radius: 7px; background: #fff; box-shadow: 0 4px 16px #0002; }
.el-tabs { display: flex; align-items: center; justify-content: space-between; margin-bottom: 7px; }
.el-tabs i { width: 1px; height: 23px; background: #d4d4d4; }
.el-tabs .on { color: #2262d4; }
.elements label { display: flex; align-items: center; gap: 4px; height: 21px; padding-left: 7px; color: #222b3d; }
.elements input { appearance: none; display: grid; place-items: center; width: 14px; height: 14px; margin: 0; border: 1px solid #a0a4ac; border-radius: 2px; background: #fff; }
.elements input:checked::before { content: ""; width: 8px; height: 4px; margin-bottom: 3px; border: solid #222b3d; border-width: 0 0 2px 2px; transform: rotate(-45deg); }
.vscroll { display: flex; flex-direction: column; align-items: center; width: 17px; padding: 37px 0 8px; background: #ebedf2; }
.vscroll .dash { width: 8px; height: 2px; margin-bottom: 7px; background: #b0b3b8; }
.vtrack { flex: 1; display: flex; align-items: flex-start; padding: 7px 0; }
.vthumb { width: 8px; height: 95%; border-radius: 4px; background: #cfd0d4; }
.sheet-tabs { display: flex; flex: none; height: 26px; border-top: 1px solid #d9d9d9; background: #ecedf0; }
.sheet-nav { display: flex; align-items: center; gap: 9px; padding: 0 12px 0 14px; color: #999; }
.sheet-tab { width: 82px; height: 25px; margin: -1px 0 0 1px; border: 1px solid #d4d4d4; border-top: 0; border-radius: 0 0 6px 6px; background: #fff; font-size: 17px; font-weight: 700; color: #057a68; }
.add-sheet { margin-left: 5px; }
.hscroll { display: flex; align-items: center; gap: 8px; width: 41%; margin-left: auto; padding-right: 19px; }
.hscroll .bar { width: 2px; height: 8px; background: #b0b3b8; }
.hscroll svg { margin: 0 4px; }
.hscroll svg:first-of-type { margin-right: 0; }
.htrack { flex: 1; }
.hthumb { display: block; width: 89%; height: 8px; border-radius: 4px; background: #cfd0d4; }

/* selection pane */
.pane { display: flex; flex-direction: column; width: 262px; flex: none; padding: 14px 16px 12px; border: solid #cfd1d6; border-width: 0 1px; }
.pane-head { display: flex; align-items: center; gap: 6px; padding: 0 6px 0 4px; }
.pane-head h2 { margin: 0; font-size: 14px; font-weight: 400; }
.pane-actions { display: flex; gap: 14px; margin-left: auto; }
.pane-sub { margin: 14px 0 7px; color: #44546f; }
.objects { flex: 1; margin: 0; padding: 8px; border: 1px solid #cdd0d5; border-radius: 5px; background: #fff; list-style: none; }
.objects li { display: flex; align-items: center; justify-content: space-between; height: 32px; padding: 0 8px; border-radius: 5px; background: #e6e6e6; }
.order, .show-all { display: flex; align-items: center; gap: 4px; margin-top: 8px; color: #2a3142; }
.order span { margin-right: 4px; }
.order button { display: grid; place-items: center; width: 24px; height: 24px; border: 1px solid #d0d3d8; border-radius: 4px; color: #aaa; }
.flip { transform: rotate(180deg); }
.show-all button { width: 60px; height: 24px; border: 1px solid #c8cace; border-radius: 4px; background: #fff; }

/* right rail */
.rail { display: flex; flex-direction: column; align-items: center; gap: 8px; width: 55px; flex: none; padding: 15px 2px 0 0; }
.rail button { display: grid; place-items: center; width: 32px; height: 32px; border-radius: 5px; }
.rail .mini { height: 16px; margin-bottom: 1px; }
.rail .on { background: #d5d7db; }

/* status bar */
.status { display: flex; align-items: center; height: 24px; flex: none; padding: 0 16px 1px; border-top: 1px solid #cfd1d6; background: #ebedf1; }
.status-tools { display: flex; align-items: center; margin-left: auto; }
.eye { margin-right: 18px; }
.move { gap: 4px; margin-right: 14px; }
.view { width: 24px; height: 22px; margin: 0 0 0 8px; border-radius: 4px; }
.view.on { background: #d6d8dc; }
.status-tools .view + .vline { margin: 0 15px 0 8px; }
.zoom-level { gap: 11px; margin-right: 17px; font-size: 13px; }
.zoom { appearance: none; width: 113px; height: 12px; margin: 0 7px 0 14px; background: linear-gradient(90deg, #1f5fd0 55%, #c9cbd0 55%) center / 100% 2px no-repeat; }
.zoom::-webkit-slider-thumb { appearance: none; width: 10px; height: 10px; border: 3px solid #fff; border-radius: 50%; background: #888; box-shadow: 0 0 2px #0006; }
.full { margin-left: 18px; }

/* input method badge and site mark float over the window */
.ime { position: absolute; right: 2px; bottom: 81px; display: flex; align-items: center; justify-content: center; gap: 4px; width: 62px; height: 26px; border: 1px solid #888; border-radius: 5px; background: #fff; box-shadow: 0 1px 3px #0008; }
.watermark { position: absolute; right: 10px; bottom: 8px; display: flex; align-items: center; gap: 1px; opacity: .9; }
.wm-logo { width: 42px; height: 40px; }
.watermark strong { display: block; font-size: 21px; line-height: 24px; color: #5b9bd8; }
.watermark span { display: block; font: 700 16px/18px "Liberation Sans", sans-serif; color: #6cc07c; }
```
